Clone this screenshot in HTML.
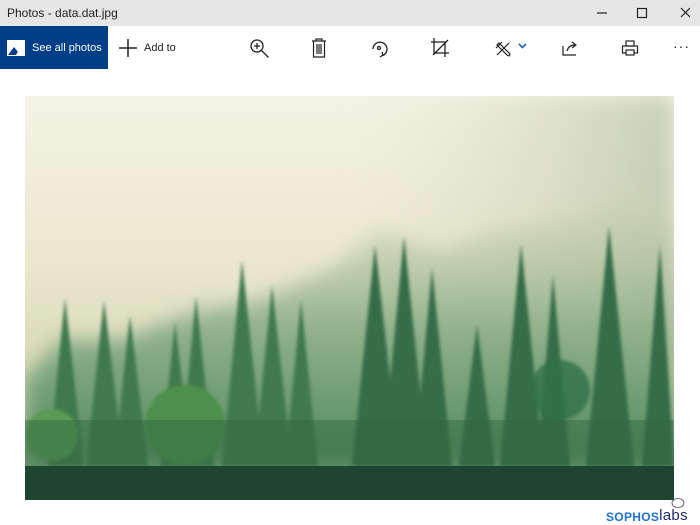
<!DOCTYPE html>
<html><head><style>
body{margin:0;width:700px;height:525px;background:#fff;font-family:"Liberation Sans",sans-serif;position:relative;overflow:hidden}
.tb{position:absolute;left:0;top:0;width:700px;height:26px;background:#e6e6e6}
.tt{position:absolute;left:7px;top:6px;font-size:12px;color:#222}
.btn{position:absolute;left:0;top:26px;width:108px;height:43px;background:#003e87;color:#fff}
.ic{position:absolute}
</style></head><body>
<div class="tb"><div class="tt">Photos - data.dat.jpg</div>
<svg class="ic" style="left:590px;top:5px" width="100" height="16" stroke="#222" fill="none" stroke-width="1.2">
<line x1="7" y1="8" x2="17" y2="8"/><rect x="47.5" y="3.5" width="9" height="9"/><path d="M91 3l9 9M100 3l-9 9"/></svg>
</div>
<div class="btn">
<svg class="ic" style="left:7px;top:14px" width="18" height="16"><rect x="0" y="0" width="18" height="16" fill="#fff"/><path d="M1 15l6-8 4 5 2-2 4 5z" fill="#003e87"/><path d="M9 15l4-7 4 7z" fill="#fff"/></svg>
<div style="position:absolute;left:32px;top:16px;font-size:11px">See all photos</div></div>
<svg class="ic" style="left:118px;top:38px" width="20" height="20" stroke="#222" stroke-width="1.5"><line x1="10" y1="1" x2="10" y2="19"/><line x1="1" y1="10" x2="19" y2="10"/></svg>
<div style="position:absolute;left:144px;top:42px;font-size:11px;color:#222">Add to</div>
<svg class="ic" style="left:249px;top:38px" width="22" height="22" stroke="#222" stroke-width="1.3" fill="none"><circle cx="8" cy="8" r="6"/><path d="M12.5 12.5l7 7M5 8h6M8 5v6"/></svg>
<svg class="ic" style="left:310px;top:37px" width="18" height="22" stroke="#222" stroke-width="1.2" fill="none"><path d="M2 4h14M6 4V2h6v2M3.5 4v16h11V4M7 7v10M9 7v10M11 7v10"/></svg>
<svg class="ic" style="left:369px;top:37px" width="22" height="22" stroke="#222" stroke-width="1.3" fill="none"><path d="M4 12a7 7 0 1 1 10 6.5"/><circle cx="10" cy="11" r="1.5"/><path d="M11 20l3-2-1-3"/></svg>
<svg class="ic" style="left:430px;top:37px" width="20" height="22" stroke="#222" stroke-width="1.3" fill="none"><path d="M4 1v15h15M1 5h14v15M3 18L18 3"/></svg>
<svg class="ic" style="left:494px;top:40px" width="20" height="18" stroke="#222" stroke-width="1.2" fill="none"><path d="M3 15L15 3M5 3l11 11-1 2-2-1L3 5zM2 8l6-6"/></svg>
<svg class="ic" style="left:518px;top:42px" width="10" height="8" stroke="#1f5fb0" stroke-width="1.6" fill="none"><path d="M1 2l3.5 3.5L8 2"/></svg>
<svg class="ic" style="left:561px;top:39px" width="18" height="18" stroke="#222" stroke-width="1.2" fill="none"><path d="M2 7v9h13M6 12c1-4 4-6 8-6M11 3l4 3-4 3"/></svg>
<svg class="ic" style="left:621px;top:39px" width="18" height="18" stroke="#222" stroke-width="1.2" fill="none"><rect x="5" y="2" width="8" height="5"/><rect x="1.5" y="7" width="15" height="7"/><rect x="5" y="11" width="8" height="5" fill="#fff"/></svg>
<div style="position:absolute;left:673px;top:38px;font-size:14px;color:#222;letter-spacing:1px">···</div>

<svg class="ic" style="left:25px;top:96px" width="649" height="404" viewBox="25 96 649 404">
<defs><linearGradient id="sky" x1="0" y1="0" x2="0" y2="1">
<stop offset="0" stop-color="#f4f3e6"/><stop offset="0.4" stop-color="#ebe8cf"/><stop offset="0.65" stop-color="#d9dbb9"/><stop offset="1" stop-color="#9ab98d"/></linearGradient>
<linearGradient id="fog" x1="0" y1="0" x2="0" y2="1"><stop offset="0" stop-color="#c4cfac" stop-opacity="0.3"/><stop offset="0.5" stop-color="#8fb08a"/><stop offset="1" stop-color="#4f8a5a"/></linearGradient>
<linearGradient id="rt" x1="0" y1="0" x2="1" y2="0"><stop offset="0" stop-color="#dcdcc4" stop-opacity="0"/><stop offset="1" stop-color="#a9b79a" stop-opacity="0.6"/></linearGradient>
<filter id="b" x="-20%" y="-20%" width="140%" height="140%"><feGaussianBlur stdDeviation="10"/></filter>
<filter id="s"><feGaussianBlur stdDeviation="1.5"/></filter></defs>
<rect x="25" y="96" width="649" height="404" fill="url(#sky)"/>
<rect x="350" y="96" width="324" height="260" fill="url(#rt)" filter="url(#b)"/>
<path d="M25 380L60 340 120 340 200 310 260 300 330 270 380 230 440 250 500 230 560 220 620 200 674 230V466H25z" fill="url(#fog)" filter="url(#b)"/>
<g fill="#3f7a4c" filter="url(#s)">
<path d="M65 298L48 466H84z"/><path d="M104 300L86 466H124z"/><path d="M130 315L114 466H148z"/><path d="M175 322L160 466H192z"/>
<path d="M196 296L180 466H214z"/><path d="M242 260L222 466H264z"/><path d="M272 285L254 466H292z"/><path d="M301 300L285 466H318z"/>
</g>
<g fill="#356d46" filter="url(#s)">
<path d="M375 245L352 466H400z"/><path d="M404 236L382 466H428z"/><path d="M432 268L414 466H452z"/><path d="M477 325L459 466H495z"/>
<path d="M521 244L500 466H544z"/><path d="M553 275L537 466H570z"/><path d="M609 226L586 466H634z"/><path d="M660 245L642 466H674z"/>
</g>
<g filter="url(#s)"><circle cx="185" cy="425" r="40" fill="#4d8f4d"/><circle cx="52" cy="435" r="26" fill="#5a9a55"/><circle cx="560" cy="390" r="30" fill="#2f7048" opacity="0.8"/></g>
<rect x="25" y="420" width="649" height="46" fill="#2f6640" opacity="0.45"/>
<rect x="25" y="466" width="649" height="34" fill="#1d4532"/>
</svg>
<div style="position:absolute;left:606px;top:508px;font-size:12px;font-weight:bold;color:#1f6fd0;letter-spacing:0.3px">SOPHOS<span style="font-weight:normal;color:#1a2a6a;font-size:15px;position:relative;top:-1px">labs</span></div>
<svg class="ic" style="left:670px;top:497px" width="16" height="12"><ellipse cx="8" cy="6" rx="6" ry="4.5" fill="none" stroke="#667" stroke-width="1"/></svg>
</body></html>
